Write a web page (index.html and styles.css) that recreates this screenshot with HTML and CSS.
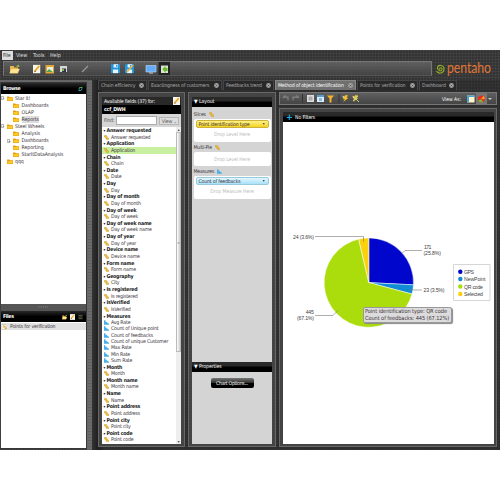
FILE: index.html
```html
<!DOCTYPE html>
<html lang="en">
<head>
<meta charset="utf-8">
<title>Pentaho Analyzer</title>
<link rel="stylesheet" href="styles.css">
</head>
<body>
<svg class="defs" width="0" height="0">
<symbol id="folder" viewBox="0 0 14 12"><path d="M0 1h5l2 2h7v9H0z" fill="#e59a00"/><path d="M1 5h12v6H1z" fill="#ffc928"/></symbol>
<symbol id="open" viewBox="0 0 14 12"><path d="M1 2h5l1 2h5v8H1z" fill="#e9b64b"/><path d="M3 6h11l-3 6H0z" fill="#ffe391"/><path d="M9 3l3-3 2 3z" fill="#9fce3b"/></symbol>
<symbol id="level" viewBox="0 0 12 12"><path d="M1 1h5v3h2v3h3v4H6V8H4V5H1z" fill="#f5c53a" stroke="#c58b13"/></symbol>
<symbol id="measure" viewBox="0 0 14 12"><path d="M0 0h4v4h4v3h3v2h3v3H0z" fill="#49afe8"/></symbol>
<symbol id="edit" viewBox="0 0 12 14"><path d="M0 0h12v14H0z" fill="#f7f4e8"/><path d="M2 12l1-4 6-7 2 2-6 7z" fill="#edab22"/><path d="M2 12l1-3 2 2z" fill="#795326"/></symbol>
<symbol id="save" viewBox="0 0 14 14"><path d="M0 0h14v14H0z" fill="#2295dc"/><path d="M4 0h7v5H4zM3 8h8v6H3z" fill="#e6f6ff"/><path d="M8 1h2v3H8z" fill="#207eb7"/></symbol>
<symbol id="close" viewBox="0 0 10 10"><circle cx="5" cy="5" r="4.800" fill="#a5a5a5"/><path d="M3 3l4 4M7 3L3 7" stroke="#4c4c4c" stroke-width="1.200"/></symbol>
<symbol id="bolt" viewBox="0 0 14 14"><path d="M6 0h6L9 5h4L2 14l4-6H2z" fill="#ffc321"/><path d="M1 1l4 2-3 3z" fill="#f3ead2"/></symbol>
</svg>
<div class="app">
  <nav class="menu"><span class="on">File</span><span class="view">View</span><span class="tools">Tools</span><span>Help</span></nav>
  <div class="top">
    <div class="bar">
      <svg viewBox="4 62 427 13">
        <use href="#open" x="9" y="64.500" width="11" height="9"/>
        <use href="#edit" x="33" y="64.500" width="7.500" height="9"/>
        <path d="M45.500 65h8.500v8.500h-8.500z" fill="#e3a736"/><path d="M47 67h6v5h-6z" fill="#eaf0e2"/><path d="M46 72l3-3 4 3z" fill="#50a44e"/>
        <path d="M60 66h7v6h-7z" fill="#d7d7d3"/><path d="M62 68.500h4v3.500h-4z" fill="#334"/><path d="M62 69h2v2h-2z" fill="#79b950"/>
        <path d="M82 72l6-6" stroke="#999" stroke-width="1.300"/>
        <use href="#save" x="111" y="64" width="9" height="9.500"/><use href="#save" x="125" y="64" width="9" height="9.500"/>
        <path d="M127 72l6-7" stroke="#f0b33a" stroke-width="1.600"/>
        <path d="M146 65.500h10v6.500h-10z" fill="#65acf4" stroke="#bfdcff" stroke-width=".6"/><path d="M149 72.500h4v1h-4z" fill="#ccc"/>
        <path d="M158.500 62h11.500v13h-11.500z" fill="#242424"/><path d="M161 65.500h7v7.500h-7z" fill="#d7e2cf"/><path d="M162.500 69l3-3v2h2v3h-2v2z" fill="#64b725"/>
      </svg>
    </div>
    <div class="logo"><svg viewBox="436 57 60 23">
      <path d="M440 69.500c-1.500-2 2.500-2.500 2 0s-5 1-4.500-2 6.500-3 6.500 1.500-6 5.500-7.500 2" fill="none" stroke="#93ae25" stroke-width="1.100"/>
      <text x="447" y="72.500" textLength="44" lengthAdjust="spacingAndGlyphs">pentaho</text>
    </svg></div>
  </div>
  <div class="work">
    <aside class="side">
      <header class="head browse"><b>Browse</b><svg class="refresh" viewBox="0 0 14 14"><path d="M2 6c1-5 6-5 8-4V0l4 4-4 3V4C7 3 5 4 5 6z" fill="#58c353"/><path d="M12 8c-1 5-6 5-8 4v2L0 10l4-3v3c3 1 5 0 5-2z" fill="#25a8d0"/></svg></header>
      <div class="tree">
        <div class="row"><i class="box">−</i><svg><use href="#folder"/></svg>Star it!</div>
        <div class="row sub"><i></i><svg><use href="#folder"/></svg>Dashboards</div>
        <div class="row sub"><i></i><svg><use href="#folder"/></svg>OLAP</div>
        <div class="row sub"><i></i><svg><use href="#folder"/></svg><span class="picked">Reports</span></div>
        <div class="row"><i class="box">−</i><svg><use href="#folder"/></svg>Steel Wheels</div>
        <div class="row sub"><i></i><svg><use href="#folder"/></svg>Analysis</div>
        <div class="row sub"><i class="box">+</i><svg><use href="#folder"/></svg>Dashboards</div>
        <div class="row sub"><i></i><svg><use href="#folder"/></svg>Reporting</div>
        <div class="row sub"><i></i><svg><use href="#folder"/></svg>StarItDataAnalysis</div>
        <div class="row"><i></i><svg><use href="#folder"/></svg>qqq</div>
      </div>
      <div class="split">·····</div>
      <header class="head"><b>Files</b><span class="acts"><svg><use href="#open"/></svg><svg><use href="#edit"/></svg><svg viewBox="0 0 12 12"><path d="M1 2h10M1 6h10M1 10h10" stroke="#66764d" stroke-width="2"/></svg></span></header>
      <div class="files"><div class="file"><svg viewBox="0 0 12 14"><path d="M0 1h9v12H0z" fill="#fff" stroke="#aaa"/><path d="M3 3h3v3h2v3h3v3H6V8H3z" fill="#e5a82a"/></svg>Points for verification</div></div>
    </aside>
    <div class="grip"></div>
    <main class="main">
      <div class="tabs">
        <div class="tab t1">Chain efficiency<svg><use href="#close"/></svg></div>
        <div class="tab t2">Exactingness of customers<svg><use href="#close"/></svg></div>
        <div class="tab t3">Feedbacks trend<svg><use href="#close"/></svg></div>
        <div class="tab t4 active">Method of object identification<svg><use href="#close"/></svg></div>
        <div class="tab t5">Points for verification<svg><use href="#close"/></svg></div>
        <div class="tab t6">Dashboard<svg><use href="#close"/></svg></div>
      </div>
      <div class="panels">
        <section class="panel fields">
          <header class="fhead"><div><span>Available fields (37) for:</span><b>ccf_DWH</b></div><svg><use href="#edit"/></svg></header>
          <div class="find"><span>Find:</span><span class="input"></span><span class="vbtn">View <small>⌄</small></span></div>
          <div class="listwrap">
          <div class="list">
            <h4>Answer requested</h4><p><svg><use href="#level"/></svg>Answer requested</p>
            <h4>Application</h4><p class="sel"><svg><use href="#level"/></svg>Application</p>
            <h4>Chain</h4><p><svg><use href="#level"/></svg>Chain</p>
            <h4>Date</h4><p><svg><use href="#level"/></svg>Date</p>
            <h4>Day</h4><p><svg><use href="#level"/></svg>Day</p>
            <h4>Day of month</h4><p><svg><use href="#level"/></svg>Day of month</p>
            <h4>Day of week</h4><p><svg><use href="#level"/></svg>Day of week</p>
            <h4>Day of week name</h4><p><svg><use href="#level"/></svg>Day of week name</p>
            <h4>Day of year</h4><p><svg><use href="#level"/></svg>Day of year</p>
            <h4>Device name</h4><p><svg><use href="#level"/></svg>Device name</p>
            <h4>Form name</h4><p><svg><use href="#level"/></svg>Form name</p>
            <h4>Geography</h4><p><svg><use href="#level"/></svg>City</p>
            <h4>Is registered</h4><p><svg><use href="#level"/></svg>Is registered</p>
            <h4>IsVerified</h4><p><svg><use href="#level"/></svg>IsVerified</p>
            <h4>Measures</h4>
            <p><svg><use href="#measure"/></svg>Avg Rate</p>
            <p><svg><use href="#measure"/></svg>Count of Unique point</p>
            <p><svg><use href="#measure"/></svg>Count of feedbacks</p>
            <p><svg><use href="#measure"/></svg>Count of unique Customer</p>
            <p><svg><use href="#measure"/></svg>Max Rate</p>
            <p><svg><use href="#measure"/></svg>Min Rate</p>
            <p><svg><use href="#measure"/></svg>Sum Rate</p>
            <h4>Month</h4><p><svg><use href="#level"/></svg>Month</p>
            <h4>Month name</h4><p><svg><use href="#level"/></svg>Month name</p>
            <h4>Name</h4><p><svg><use href="#level"/></svg>Name</p>
            <h4>Point address</h4><p><svg><use href="#level"/></svg>Point address</p>
            <h4>Point city</h4><p><svg><use href="#level"/></svg>Point city</p>
            <h4>Point code</h4><p><svg><use href="#level"/></svg>Point code</p>
          </div>
          <div class="scroll"><span>▴</span><div class="thumb">=</div><span class="down">▾</span></div>
          </div>
        </section>
        <section class="panel layout">
          <header class="lhead">▼ Layout</header>
          <div class="lbody">
            <div class="lab">Slices <svg><use href="#level"/></svg></div>
            <div class="drop"><div class="chip yellow">Point identification type<i>▾</i></div><em>Drop Level Here</em></div>
            <div class="lab">Multi-Pie <svg><use href="#level"/></svg></div>
            <div class="drop short"><em>Drop Level Here</em></div>
            <div class="lab">Measures <svg><use href="#measure"/></svg></div>
            <div class="drop"><div class="chip blue">Count of feedbacks<i>▾</i></div><em>Drop Measure Here</em></div>
          </div>
          <header class="lhead prop">▼ Properties</header>
          <div class="pbody"><div class="btn">Chart Options...</div></div>
        </section>
        <div class="right">
          <div class="rtool"><svg viewBox="280 93 216 11">
            <path d="M283 98l2-2v1.200h3v3M299 98l-2-2v1.200h-4v3" fill="none" stroke="#848484" stroke-width="1.200"/>
            <path d="M302.500 94v9M339 94v9" stroke="#333"/>
            <path d="M307 95h7v7h-7z" fill="#ddd"/><path d="M308.500 96.500h4v4h-4z" fill="#aaa"/>
            <path d="M317 95h7v7h-7z" fill="#ddeefa"/><path d="M317 95h7v2h-7z" fill="#589dcc"/><path d="M319 98h3v3h-3z" fill="#8bd"/>
            <path d="M327 95.500h7l-2.500 3v4h-2v-4z" fill="#f8b326"/>
            <use href="#bolt" x="342" y="95" width="7" height="7.500"/><use href="#bolt" x="352" y="95" width="7" height="7.500"/><path d="M353 101l5-5M354 97l5 5" stroke="#b5d99b"/>
            <text x="442" y="100.600" textLength="19" lengthAdjust="spacingAndGlyphs">View As:</text>
            <path d="M467 95.500h7.500v7H467z" fill="#fff5c9"/><path d="M467 95.500h7.500v1.500H467zM467 97h2v5.500h-2z" fill="#48a4d2"/>
            <path d="M476 93h11v11h-11z" fill="#777"/><circle cx="481.300" cy="99" r="3.500" fill="#e62d24"/><path d="M481.300 99l-3.200 1.500a3.500 3.500 0 0 0 5 1.500z" fill="#72b934"/><path d="M481.300 99l2-3a3.500 3.500 0 0 1 1.500 3z" fill="#f6a323"/>
            <path d="M488 98h4l-2 2z" fill="#ccc"/>
          </svg></div>
          <section class="panel report">
            <header class="rhead"><span>+</span>No Filters</header>
            <div class="canvas">
              <svg viewBox="283 122 211 322" width="211" height="322">
                <g stroke="#fff" stroke-width=".5">
                <path d="M368.800 282.600V237.900A44.700 44.700 0 0 1 413.440 284.860z" fill="#0006cb"/>
                <path d="M368.800 282.600L413.440 284.860A44.700 44.700 0 0 1 412 294z" fill="#118bd4"/>
                <path d="M368.800 282.600L412 294A44.700 44.700 0 1 1 358.700 239.060z" fill="#abdd0c"/>
                <path d="M368.800 282.600L358.700 239.060A44.700 44.700 0 0 1 368.800 237.900z" fill="#fbd00d"/>
                </g>
                <g fill="none" stroke="#777" stroke-width=".6"><path d="M315 236.500h48.500v5M402 253.500l3-3h17M410 289.500l4 .5h8M315 315.500h18l5-5"/></g>
                <g class="labels">
                <text x="293" y="238.500" textLength="21">24 (3.6%)</text>
                <text x="424" y="249.200" textLength="7.500">171</text><text x="423.500" y="255.300" textLength="17.500">(25.8%)</text>
                <text x="423.500" y="292" textLength="21">23 (3.5%)</text>
                <text x="305.800" y="314" textLength="8">445</text><text x="297" y="320" textLength="17">(67.1%)</text>
                </g>
                <path d="M453.500 264.500h36.500v36h-36.500z" fill="#fff" stroke="#ccc" stroke-width=".8"/>
                <circle cx="460.300" cy="271.700" r="2.200" fill="#0006cb"/><circle cx="460.300" cy="279" r="2.200" fill="#118bd4"/><circle cx="460.300" cy="286.500" r="2.200" fill="#abdd0c"/><circle cx="460.300" cy="294" r="2.200" fill="#fbd00d"/>
                <g class="labels"><text x="464" y="273.700" textLength="10">GPS</text><text x="464" y="281" textLength="21.500">NewPoint</text><text x="464" y="288.500" textLength="19">QR code</text><text x="464" y="296" textLength="19">Selected</text></g>
              </svg>
              <div class="tip">Point identification type: QR code<br>Count of feedbacks: 445 (67.12%)</div>
            </div>
          </section>
        </div>
      </div>
    </main>
  </div>
</div>
</body>
</html>
```
FILE: styles.css
```css
* { box-sizing: border-box; }
html, body { margin: 0; }
body { padding: 50px 0; width: 500px; height: 500px; overflow: hidden; background: #fff; font: 5.2px/7px "DejaVu Sans Condensed", "DejaVu Sans", sans-serif; font-stretch: condensed; letter-spacing: -.18px; color: #3c343c; white-space: nowrap; }
.defs { position: absolute; }
svg { display: block; flex: none; }
b, h4 { font-weight: bold; }
.app { height: 400px; display: flex; flex-direction: column; background-color: #343434; background-image: repeating-linear-gradient(90deg, rgba(255,255,255,.045) 0 1px, transparent 1px 3px), repeating-linear-gradient(0deg, rgba(255,255,255,.045) 0 1px, transparent 1px 3px); }
.menu { height: 11px; display: flex; align-items: center; padding-left: 2px; color: #ddd; font-size: 5.4px; letter-spacing: -.1px; }
.menu span { width: 17px; }
.menu .view { padding-left: 3px; width: 20px; }
.menu .on { background: #ddd; color: #333; width: 11px; height: 9px; line-height: 9px; padding-left: 1px; }
.top { height: 19px; display: flex; padding-left: 3px; }
.bar { width: 429px; height: 15px; border: 1px solid #777; border-bottom-color: #555; background: linear-gradient(rgba(105,105,105,.8), rgba(70,70,70,.8)); }
.bar svg { width: 427px; height: 13px; }
.logo { margin: -4px 0 0 4px; }
.logo svg { width: 60px; height: 23px; }
.logo text { font: 400 15px/18px Lato, sans-serif; letter-spacing: 0; fill: #e37635; }
.work { flex: 1; min-height: 0; display: flex; }
.side { width: 87px; border-top: 2px solid #666; padding: 1px 1px 2px; display: flex; flex-direction: column; }
.head { height: 11px; display: flex; align-items: center; justify-content: space-between; padding: 0 3px 0 2px; color: #fff; background: linear-gradient(#292929, #000 50%); flex: none; letter-spacing: -.35px; }
.refresh { width: 5px; height: 6px; }
.tree { height: 210px; background: #fff; padding-top: .5px; letter-spacing: -.08px; }
.row { display: flex; align-items: center; height: 7.08px; gap: 2px; }
.row.sub { padding-left: 6px; }
.row.sub svg { margin-right: .6px; }
.row i { width: 4px; font-style: normal; font-size: 4px; line-height: 3px; color: #777; text-align: center; }
.row .box { width: 3px; height: 4px; margin-right: 1px; border: .5px solid #bbb; }
.row svg { width: 6px; height: 5px; }
.picked { background: #ddd; }
.split { height: 7px; text-align: center; color: #ccc; font-size: 6px; line-height: 6px; letter-spacing: .5px; background: #555; flex: none; }
.acts { display: flex; gap: 3px; }
.acts svg { width: 5px; height: 6px; }
.files { background: #fff; flex: 1; padding-top: 1px; }
.file { display: flex; align-items: center; gap: 3px; background: #e2e2e2; height: 7px; padding-left: 1px; }
.file svg { width: 5px; height: 6px; }
.grip { width: 5px; background-color: #6c6c6c; background-image: repeating-linear-gradient(0deg, #606060 0 1px, transparent 1px 3px); }
.main { flex: 1; padding: 0 3px 3px 6px; min-width: 0; display: flex; flex-direction: column; background: linear-gradient(90deg, #333, #202020 6px, rgba(32,32,32,.4) 12px); }
.tabs { display: flex; height: 10px; gap: 1px; }
.tab { height: 10px; display: flex; align-items: center; justify-content: space-between; padding: 0 2px; background: #292929; border: 1px solid #444; border-bottom: 0; color: #aaa; font-size: 5.2px; }
.tab svg { width: 5px; height: 5px; }
.t1 { width: 49px; } .t2 { width: 74px; } .t3 { width: 51px; } .t4 { width: 81px; } .t5 { width: 61px; } .t6 { width: 38px; }
.tab.active { color: #fff; background: #707070; border-color: #888; }
.panels { flex: 1; min-height: 0; display: flex; margin-top: 2px; gap: 3px; }
.panel { border: 1px solid #686868; padding: 4px 3px 2px; background: #444; display: flex; flex-direction: column; }
.fields { width: 87px; }
.fhead { height: 17px; color: #fff; background: linear-gradient(#292929 45%, #000 50%); display: flex; justify-content: space-between; padding: 0 1px 0 2px; }
.fhead div { display: flex; flex-direction: column; line-height: 8px; }
.fhead svg { width: 7px; height: 8px; background: #fff; }
.find { height: 13px; background: #d6d6d6; display: flex; align-items: center; padding: 0 2px; gap: 2px; flex: none; color: #555; }
.input { width: 42px; height: 9px; background: #fff; border: 1px solid #aaa; }
.vbtn { width: 20px; height: 8px; line-height: 6px; border: 1px solid #b5b5b5; background: #ddd; text-align: center; }
.listwrap { flex: 1; min-height: 0; display: flex; background: #fff; }
.list { flex: 1; overflow: hidden; }
.list h4 { margin: 0; height: 6.95px; font-size: 5.2px; color: #222; padding-left: 4.5px; letter-spacing: -.2px; }
.list h4::before { content: "▾"; float: left; width: 3px; margin-left: -3px; font-size: 4px; }
.list p { margin: 0; height: 6.32px; line-height: 7px; display: flex; align-items: center; gap: 2px; padding-left: 2px; }
.list svg { width: 5px; height: 5px; }
.list .sel { background: #c9efa1; }
.scroll { width: 5px; background: #eee; display: flex; flex-direction: column; align-items: center; font-size: 4px; line-height: 5px; }
.thumb { width: 5px; height: 220px; border: 1px solid #bbb; background: linear-gradient(90deg, #fff, #ccc); font-size: 4px; display: flex; align-items: center; }
.down { margin-top: auto; }
.layout { width: 88px; }
.lhead { height: 10px; line-height: 9px; background: linear-gradient(#292929 40%, #000 50%); color: #fff; padding-left: 2px; flex: none; letter-spacing: -.08px; }
.lbody { height: 255px; background: #d4d4d4; padding: 2.5px 1.5px; flex: none; }
.pbody { flex: 1; background: #d4d4d4; padding-top: 6px; }
.lab { height: 9px; display: flex; align-items: center; gap: 3px; }
.lab svg { width: 5px; height: 5px; }
.drop { height: 23px; background: #fff; border-radius: 2px; text-align: center; padding: 1.5px 2px; margin-bottom: 1px; display: flex; flex-direction: column; }
.drop em { font-style: normal; color: #bbb; margin: auto; padding-top: 1px; letter-spacing: -.1px; }
.drop.short { height: 14px; }
.chip { height: 8px; line-height: 6px; border: 1px solid #ccb337; border-radius: 2px; display: flex; justify-content: space-between; padding: 0 3px 0 2px; background: linear-gradient(#fff28a, #f5d321); }
.chip.blue { border-color: #97c9df; background: linear-gradient(#e1f7ff, #a9e1f8); }
.chip i { font-style: normal; font-size: 4px; }
.btn { margin: 0 auto; width: 43px; height: 10px; line-height: 10px; border-radius: 2px; color: #fff; background: linear-gradient(#777, #333 45%, #000 50%); text-align: center; letter-spacing: -.3px; }
.right { flex: 1; min-width: 0; display: flex; flex-direction: column; gap: 3px; }
.rtool { height: 13px; border: 1px solid #777; background: linear-gradient(#606060, #454545); flex: none; }
.rtool svg { width: 216px; height: 11px; }
.rtool text { font-size: 5.2px; letter-spacing: 0; fill: #fff; }
.report { flex: 1; min-height: 0; padding: 3px 2px 2px 3px; }
.rhead { height: 10px; line-height: 9px; background: linear-gradient(#292929 40%, #000 50%); color: #fff; display: flex; align-items: center; padding-left: 3px; gap: 2.5px; flex: none; }
.rhead span { color: #16b9ee; font-size: 9px; font-weight: bold; }
.canvas { position: relative; flex: 1; min-height: 0; background: #fff; overflow: hidden; }
.labels text { font: 5.2px "Liberation Sans", sans-serif; letter-spacing: 0; fill: #444; }
.tip { position: absolute; left: 80px; top: 185px; width: 89px; height: 16px; padding: 0 1px; font-size: 5.6px; line-height: 7px; letter-spacing: -.07px; background: #dcdcdc; border: 1px solid #999; border-radius: 2px; box-shadow: 1px 1px 1px #888; }
```
